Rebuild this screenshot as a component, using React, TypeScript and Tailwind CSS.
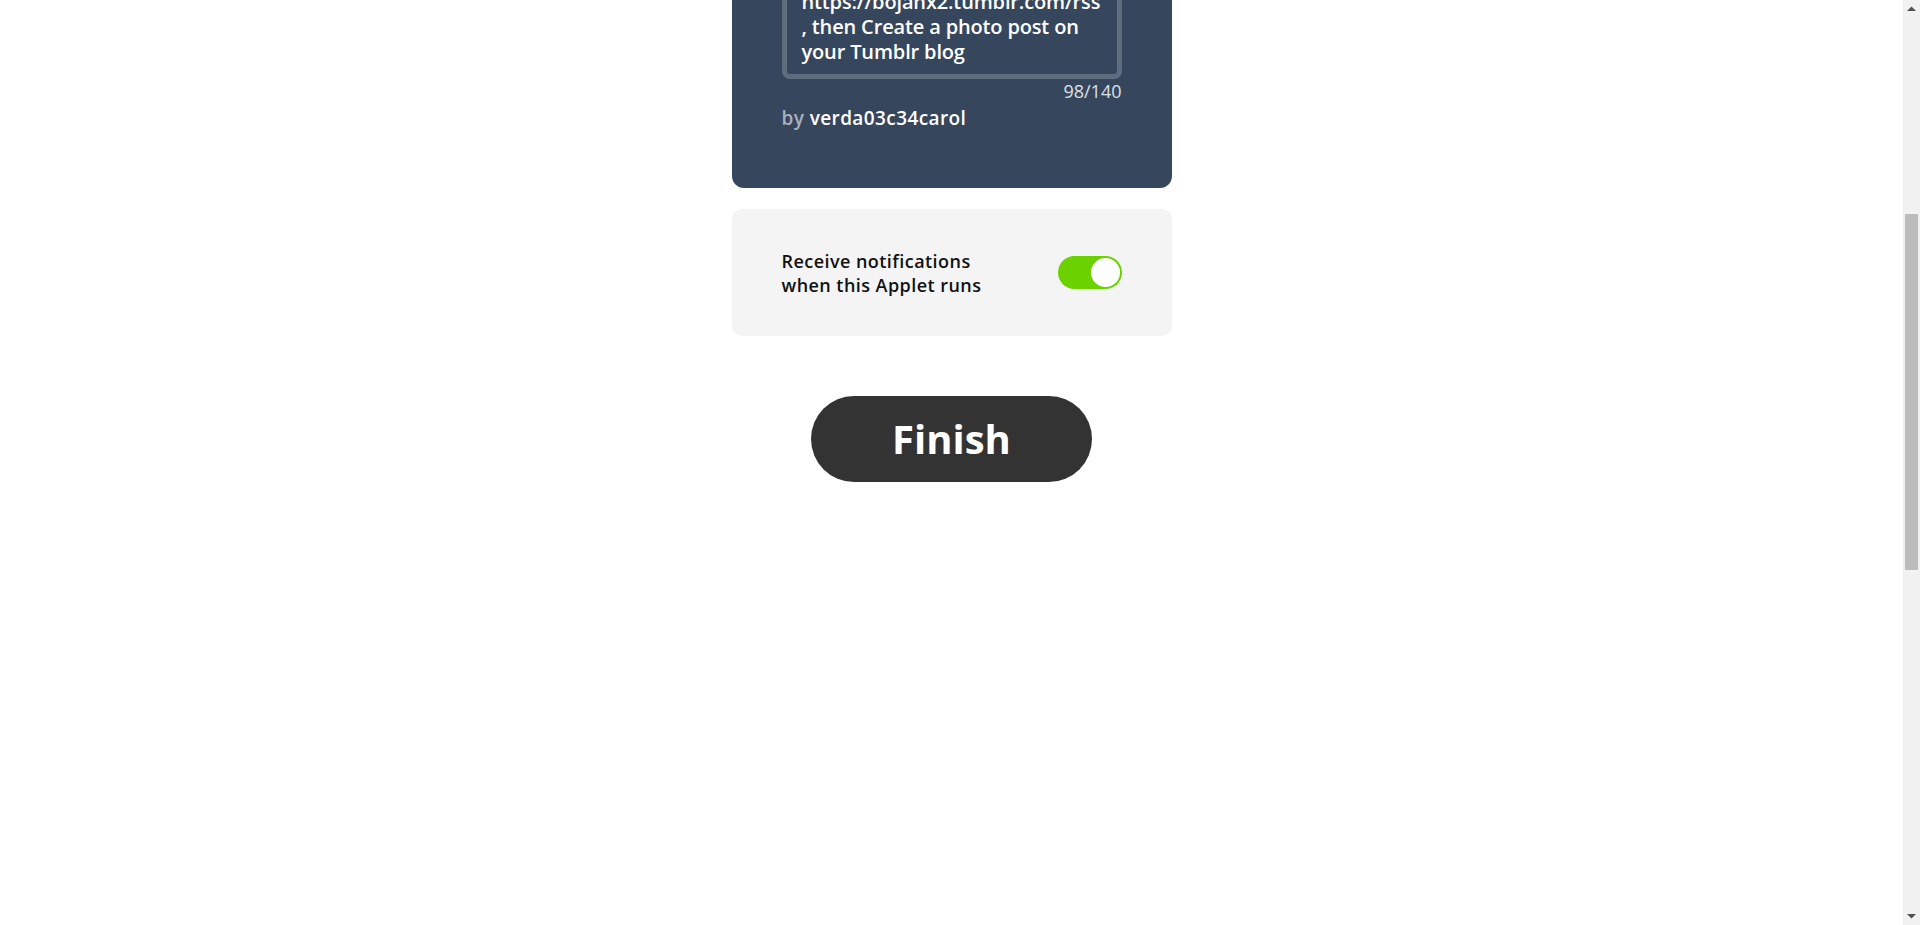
import React from "react";

function Scrollbar() {
  return (
    <div className="flex h-full w-[17px] shrink-0 flex-col bg-[#f1f1f1]">
      <div className="flex h-[17px] items-center justify-center">
        <svg width="9" height="5" viewBox="0 0 9 5">
          <path d="M0 5 L4.5 0.5 L9 5 Z" fill="#505050" />
        </svg>
      </div>
      <div className="flex-1 pt-[197px]">
        <div className="mx-[2px] h-[356px] bg-[#bcbcbc]" />
      </div>
      <div className="flex h-[17px] items-center justify-center">
        <svg width="9" height="5" viewBox="0 0 9 5">
          <path d="M0 0 L4.5 4.5 L9 0 Z" fill="#505050" />
        </svg>
      </div>
    </div>
  );
}

export default function App() {
  const font = { fontFamily: "'Open Sans', 'Noto Sans', sans-serif" };
  return (
    <div className="flex h-[925px] w-full overflow-hidden bg-white" style={font}>
      <main className="flex-1 overflow-hidden">
        <div className="mx-auto -mt-[53px] flex w-[440px] flex-col">
          <section className="rounded-[12px] bg-[#36465d] px-[50px] pb-[58px]">
            <div className="rounded-[8px] border-[5px] border-[#5e6d80] px-[15px] pb-[10px] pt-[12px] text-[20px] font-semibold leading-[25px] tracking-[-0.15px] text-white">
              If new feed item from
              <br />
              https://bojanx2.tumblr.com/rss
              <br />
              , then Create a photo post on
              <br />
              your Tumblr blog
            </div>
            <div className="text-right text-[18px] font-normal leading-[24px] text-[#dde1e6]">98/140</div>
            <div className="mt-[3px] text-[19px] font-semibold leading-[24px] tracking-[0.4px]">
              <span className="text-[#a9b2bf]">by </span>
              <span className="text-white">verda03c34carol</span>
            </div>
          </section>

          <section className="mt-[21px] flex h-[127px] items-center justify-between rounded-[10px] bg-[#f4f4f4] px-[50px]">
            <div className="text-[18px] font-semibold leading-[24px] tracking-[0.45px] text-[#111]">
              Receive notifications
              <br />
              when this Applet runs
            </div>
            <div className="flex h-[33px] w-[64px] items-center justify-end rounded-full bg-[#6bd200] p-[2px]">
              <div className="h-[29px] w-[29px] rounded-full bg-white" />
            </div>
          </section>

          <div className="mt-[60px] flex justify-center">
            <button className="flex h-[86px] w-[281px] items-center justify-center rounded-full bg-[#333333] text-[40px] font-bold text-white">
              Finish
            </button>
          </div>
        </div>
      </main>
      <Scrollbar />
    </div>
  );
}
